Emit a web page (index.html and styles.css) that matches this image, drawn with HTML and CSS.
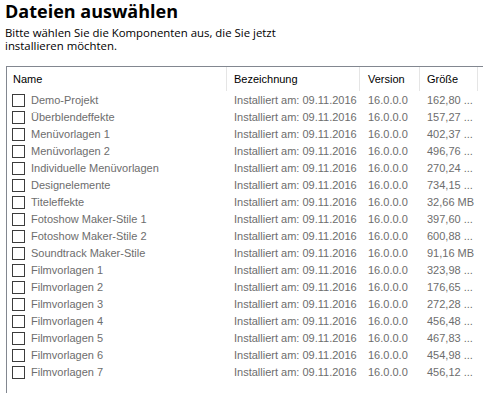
FILE: index.html
```html
<!DOCTYPE html>
<html lang="de">
<head>
<meta charset="utf-8">
<link rel="stylesheet" href="styles.css">
</head>
<body>
<div class="page">
  <h1 class="title">Dateien auswählen</h1>
  <p class="intro">Bitte wählen Sie die Komponenten aus, die Sie jetzt<br>installieren möchten.</p>
  <div class="list">
    <div class="row head">
      <div class="cell c1">Name</div>
      <div class="cell c2">Bezeichnung</div>
      <div class="cell c3">Version</div>
      <div class="cell c4">Größe</div>
      <div class="cell c5"></div>
    </div>
    <div class="row"><div class="cell c1"><span class="cb"></span>Demo-Projekt</div><div class="cell c2">Installiert am: 09.11.2016</div><div class="cell c3">16.0.0.0</div><div class="cell c4">162,80 ...</div></div>
    <div class="row"><div class="cell c1"><span class="cb"></span>Überblendeffekte</div><div class="cell c2">Installiert am: 09.11.2016</div><div class="cell c3">16.0.0.0</div><div class="cell c4">157,27 ...</div></div>
    <div class="row"><div class="cell c1"><span class="cb"></span>Menüvorlagen 1</div><div class="cell c2">Installiert am: 09.11.2016</div><div class="cell c3">16.0.0.0</div><div class="cell c4">402,37 ...</div></div>
    <div class="row"><div class="cell c1"><span class="cb"></span>Menüvorlagen 2</div><div class="cell c2">Installiert am: 09.11.2016</div><div class="cell c3">16.0.0.0</div><div class="cell c4">496,76 ...</div></div>
    <div class="row"><div class="cell c1"><span class="cb"></span>Individuelle Menüvorlagen</div><div class="cell c2">Installiert am: 09.11.2016</div><div class="cell c3">16.0.0.0</div><div class="cell c4">270,24 ...</div></div>
    <div class="row"><div class="cell c1"><span class="cb"></span>Designelemente</div><div class="cell c2">Installiert am: 09.11.2016</div><div class="cell c3">16.0.0.0</div><div class="cell c4">734,15 ...</div></div>
    <div class="row"><div class="cell c1"><span class="cb"></span>Titeleffekte</div><div class="cell c2">Installiert am: 09.11.2016</div><div class="cell c3">16.0.0.0</div><div class="cell c4">32,66 MB</div></div>
    <div class="row"><div class="cell c1"><span class="cb"></span>Fotoshow Maker-Stile 1</div><div class="cell c2">Installiert am: 09.11.2016</div><div class="cell c3">16.0.0.0</div><div class="cell c4">397,60 ...</div></div>
    <div class="row"><div class="cell c1"><span class="cb"></span>Fotoshow Maker-Stile 2</div><div class="cell c2">Installiert am: 09.11.2016</div><div class="cell c3">16.0.0.0</div><div class="cell c4">600,88 ...</div></div>
    <div class="row"><div class="cell c1"><span class="cb"></span>Soundtrack Maker-Stile</div><div class="cell c2">Installiert am: 09.11.2016</div><div class="cell c3">16.0.0.0</div><div class="cell c4">91,16 MB</div></div>
    <div class="row"><div class="cell c1"><span class="cb"></span>Filmvorlagen 1</div><div class="cell c2">Installiert am: 09.11.2016</div><div class="cell c3">16.0.0.0</div><div class="cell c4">323,98 ...</div></div>
    <div class="row"><div class="cell c1"><span class="cb"></span>Filmvorlagen 2</div><div class="cell c2">Installiert am: 09.11.2016</div><div class="cell c3">16.0.0.0</div><div class="cell c4">176,65 ...</div></div>
    <div class="row"><div class="cell c1"><span class="cb"></span>Filmvorlagen 3</div><div class="cell c2">Installiert am: 09.11.2016</div><div class="cell c3">16.0.0.0</div><div class="cell c4">272,28 ...</div></div>
    <div class="row"><div class="cell c1"><span class="cb"></span>Filmvorlagen 4</div><div class="cell c2">Installiert am: 09.11.2016</div><div class="cell c3">16.0.0.0</div><div class="cell c4">456,48 ...</div></div>
    <div class="row"><div class="cell c1"><span class="cb"></span>Filmvorlagen 5</div><div class="cell c2">Installiert am: 09.11.2016</div><div class="cell c3">16.0.0.0</div><div class="cell c4">467,83 ...</div></div>
    <div class="row"><div class="cell c1"><span class="cb"></span>Filmvorlagen 6</div><div class="cell c2">Installiert am: 09.11.2016</div><div class="cell c3">16.0.0.0</div><div class="cell c4">454,98 ...</div></div>
    <div class="row"><div class="cell c1"><span class="cb"></span>Filmvorlagen 7</div><div class="cell c2">Installiert am: 09.11.2016</div><div class="cell c3">16.0.0.0</div><div class="cell c4">456,12 ...</div></div>
  </div>
</div>
</body>
</html>
```
FILE: styles.css
```css
html, body {
  margin: 0;
  padding: 0;
  background: #ffffff;
  overflow: hidden;
}
.page {
  width: 483px;
  height: 393px;
  overflow: hidden;
}
.title {
  margin: 0;
  padding: 0 0 0 5px;
  font-family: "Open Sans", "Noto Sans", sans-serif;
  font-weight: 700;
  font-size: 18px;
  line-height: 23px;
  color: #000;
}
.intro {
  margin: 3px 0 0 5px;
  font-family: "Open Sans", "Noto Sans", sans-serif;
  font-size: 11.4px;
  line-height: 13px;
  color: #000;
}
.list {
  margin: 14px 0 0 6px;
  width: 490px;
  height: 400px;
  border: 1px solid #828790;
  box-sizing: border-box;
  font-family: "Liberation Sans", Arial, sans-serif;
  font-size: 11px;
  color: #6d6d6d;
}
.row {
  display: grid;
  grid-template-columns: 220px 133px 60px 58px 1fr;
  height: 17px;
  line-height: 17px;
  white-space: nowrap;
}
.row.head {
  height: 24px;
  line-height: 23px;
  color: #000;
  margin-bottom: 1px;
}
.head .cell {
  border-right: 1px solid #e5e5e5;
}
.cell {
  overflow: hidden;
  padding-left: 7px;
  display: flex;
  align-items: center;
}
.head .cell.c1 { padding-left: 6px; }
.row:not(.head) .c1 { padding-left: 5px; }
.row:not(.head) .c2 { padding-left: 7px; }
.row:not(.head) .c3 { padding-left: 8px; }
.head .c3 { padding-left: 8px; }
.cb {
  display: inline-block;
  width: 11px;
  height: 11px;
  border: 1px solid #3c3c3c;
  margin-right: 6px;
  flex: none;
}
```
